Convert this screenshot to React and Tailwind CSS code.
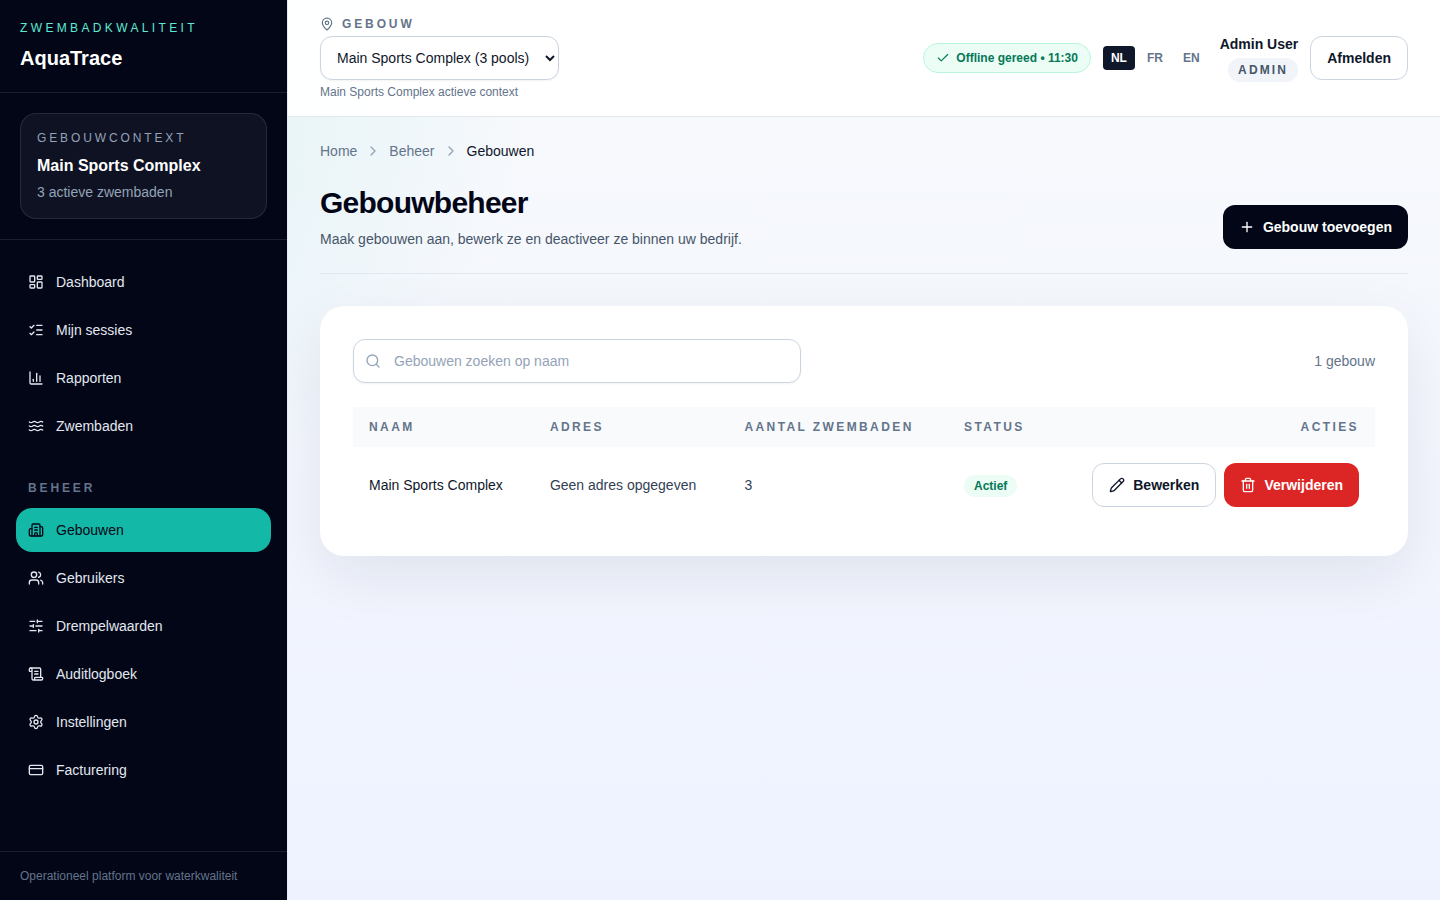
import React, { useState } from 'react';
import {
  Building2,
  ChartColumn,
  Check,
  ChevronRight,
  CreditCard,
  LayoutDashboard,
  ListChecks,
  MapPin,
  Pencil,
  Plus,
  ScrollText,
  Search,
  Settings,
  SlidersHorizontal,
  Trash2,
  Users,
  Waves,
} from 'lucide-react';

const mainNav = [
  { label: 'Dashboard', icon: LayoutDashboard },
  { label: 'Mijn sessies', icon: ListChecks },
  { label: 'Rapporten', icon: ChartColumn },
  { label: 'Zwembaden', icon: Waves },
];

const adminNav = [
  { label: 'Gebouwen', icon: Building2, active: true },
  { label: 'Gebruikers', icon: Users },
  { label: 'Drempelwaarden', icon: SlidersHorizontal },
  { label: 'Auditlogboek', icon: ScrollText },
  { label: 'Instellingen', icon: Settings },
  { label: 'Facturering', icon: CreditCard },
];

const buildings = [{ id: 1, name: 'Main Sports Complex', address: '', pools: 3, active: true }];

function NavItem({ label, icon: Icon, active }) {
  return (
    <li>
      <a
        href="#"
        aria-current={active ? 'page' : undefined}
        className={`flex h-11 items-center gap-3 rounded-2xl px-3 text-sm ${
          active ? 'bg-[#14b8a6] text-[#020617]' : 'text-[#e2e8f0] hover:bg-white/5'
        }`}
      >
        <Icon size={16} />
        {label}
      </a>
    </li>
  );
}

function Sidebar() {
  return (
    <aside className="z-10 flex w-72 shrink-0 flex-col border-r border-[#e2e8f0]/70 bg-[#020617] bg-clip-padding text-white">
      <div className="border-b border-white/10 p-5">
        <p className="text-xs tracking-[0.28em] text-[#5eead4] uppercase">Zwembadkwaliteit</p>
        <p className="mt-2 text-xl font-semibold">AquaTrace</p>
      </div>

      <div className="border-b border-white/10 p-5">
        <div className="rounded-2xl border border-white/10 bg-white/5 p-4">
          <p className="text-xs tracking-[0.24em] text-[#94a3b8] uppercase">Gebouwcontext</p>
          <p className="mt-2 text-base font-semibold">Main Sports Complex</p>
          <p className="mt-1 text-sm text-[#94a3b8]">3 actieve zwembaden</p>
        </div>
      </div>

      <nav className="flex-1 px-4 py-5">
        <ul className="space-y-1">
          {mainNav.map((item) => (
            <NavItem key={item.label} {...item} />
          ))}
        </ul>
        <p className="mt-8 px-3 pb-3 text-xs font-semibold tracking-[0.24em] text-[#64748b] uppercase">Beheer</p>
        <ul className="space-y-1">
          {adminNav.map((item) => (
            <NavItem key={item.label} {...item} />
          ))}
        </ul>
      </nav>

      <div className="border-t border-white/10 px-5 py-4 text-xs text-[#64748b]">
        Operationeel platform voor waterkwaliteit
      </div>
    </aside>
  );
}

function Header() {
  const [lang, setLang] = useState('NL');

  return (
    <header className="flex items-center justify-between gap-4 border-b border-[#e2e8f0] bg-white/95 px-8 py-4">
      <div className="flex flex-col items-start gap-1">
        <label
          htmlFor="building"
          className="flex items-center gap-2 text-xs font-semibold tracking-[0.24em] text-[#64748b] uppercase"
        >
          <MapPin size={14} />
          Gebouw
        </label>
        <select
          id="building"
          className="h-11 rounded-xl border border-[#cbd5e1] bg-white px-3 text-sm text-[#0f172a] shadow-xs"
        >
          <option>Main Sports Complex (3 pools)</option>
        </select>
        <p className="text-xs text-[#64748b]">Main Sports Complex actieve context</p>
      </div>

      <div className="flex items-center gap-3">
        <div className="flex items-center gap-1.5 rounded-full border border-[#b9f6db] bg-[#ecfdf5] px-3 py-1.5 text-xs font-semibold text-[#047857]">
          <Check size={14} />
          Offline gereed • 11:30
        </div>
        <div className="flex items-center gap-1">
          {['NL', 'FR', 'EN'].map((code) => (
            <button
              key={code}
              type="button"
              onClick={() => setLang(code)}
              className={`rounded px-2 py-1 text-xs font-semibold ${
                lang === code ? 'bg-[#0f172a] text-white' : 'text-[#64748b]'
              }`}
            >
              {code}
            </button>
          ))}
        </div>
        <div className="flex flex-col items-end gap-1">
          <p className="text-sm font-semibold text-[#0f172a]">Admin User</p>
          <span className="rounded-full bg-[#f1f5f9] px-2.5 py-1 text-xs font-semibold tracking-[0.18em] text-[#475569] uppercase">
            Admin
          </span>
        </div>
        <button
          type="button"
          className="h-11 rounded-xl border border-[#cbd5e1] bg-white px-4 text-sm font-semibold text-[#0f172a]"
        >
          Afmelden
        </button>
      </div>
    </header>
  );
}

function BuildingsTable() {
  return (
    <table className="w-full text-left text-sm">
      <thead className="bg-[#f8fafc] text-xs tracking-[0.2em] text-[#64748b] uppercase">
        <tr>
          <th className="px-4 py-3 font-semibold">Naam</th>
          <th className="px-4 py-3 font-semibold">Adres</th>
          <th className="px-4 py-3 font-semibold">Aantal zwembaden</th>
          <th className="px-4 py-3 font-semibold">Status</th>
          <th className="px-4 py-3 text-right font-semibold">Acties</th>
        </tr>
      </thead>
      <tbody>
        {buildings.map((building) => (
          <tr key={building.id} className="text-[#334155]">
            <td className="p-4 text-[#0f172a]">{building.name}</td>
            <td className="p-4">{building.address || 'Geen adres opgegeven'}</td>
            <td className="p-4">{building.pools}</td>
            <td className="p-4">
              <span className="rounded-full bg-[#ecfdf5] px-2.5 py-1 text-xs font-semibold text-[#047857]">
                {building.active ? 'Actief' : 'Inactief'}
              </span>
            </td>
            <td className="p-4">
              <div className="flex justify-end gap-2">
                <button
                  type="button"
                  className="flex h-11 items-center gap-2 rounded-xl border border-[#cbd5e1] bg-white px-4 font-semibold text-[#0f172a]"
                >
                  <Pencil size={16} />
                  Bewerken
                </button>
                <button
                  type="button"
                  className="flex h-11 items-center gap-2 rounded-xl bg-[#dc2626] px-4 font-semibold text-white"
                >
                  <Trash2 size={16} />
                  Verwijderen
                </button>
              </div>
            </td>
          </tr>
        ))}
      </tbody>
    </table>
  );
}

export default function App() {
  const [query, setQuery] = useState('');

  return (
    <div className="flex min-h-screen bg-[radial-gradient(circle_at_top_left,rgba(20,184,166,0.14),transparent_32%),linear-gradient(180deg,#f8fafc_0%,#eef2ff_100%)] font-['Liberation_Sans',Arial,sans-serif] text-[#020617]">
      <Sidebar />
      <div className="min-w-0 flex-1">
        <Header />
        <main className="px-8 py-6">
          <nav aria-label="Breadcrumb" className="flex items-center gap-2 text-sm text-[#64748b]">
            <a href="#">Home</a>
            <ChevronRight size={16} className="text-[#94a3b8]" />
            <a href="#">Beheer</a>
            <ChevronRight size={16} className="text-[#94a3b8]" />
            <span className="text-[#0f172a]">Gebouwen</span>
          </nav>

          <div className="mt-6 flex items-end justify-between gap-4 border-b border-[#e2e8f0] pb-6">
            <div>
              <h1 className="text-3xl font-semibold tracking-tight">Gebouwbeheer</h1>
              <p className="mt-2 text-sm text-[#475569]">
                Maak gebouwen aan, bewerk ze en deactiveer ze binnen uw bedrijf.
              </p>
            </div>
            <button
              type="button"
              className="flex h-11 items-center gap-2 rounded-xl bg-[#020617] px-4 text-sm font-semibold text-white"
            >
              <Plus size={16} />
              Gebouw toevoegen
            </button>
          </div>

          <section className="mt-8 rounded-3xl border border-white/70 bg-white p-8 shadow-[0_20px_60px_rgba(15,23,42,0.08)]">
            <div className="mb-6 flex items-center justify-between gap-4">
              <div className="relative w-full max-w-md">
                <Search size={16} className="absolute top-1/2 left-3 -translate-y-1/2 text-[#94a3b8]" />
                <input
                  type="search"
                  aria-label="Gebouwen zoeken op naam"
                  placeholder="Gebouwen zoeken op naam"
                  value={query}
                  onChange={(e) => setQuery(e.target.value)}
                  className="h-11 w-full rounded-xl border border-[#cbd5e1] bg-white pr-4 pl-10 text-sm shadow-xs placeholder:text-[#94a3b8]"
                />
              </div>
              <p className="text-sm text-[#64748b]">1 gebouw</p>
            </div>
            <BuildingsTable />
          </section>
        </main>
      </div>
    </div>
  );
}
